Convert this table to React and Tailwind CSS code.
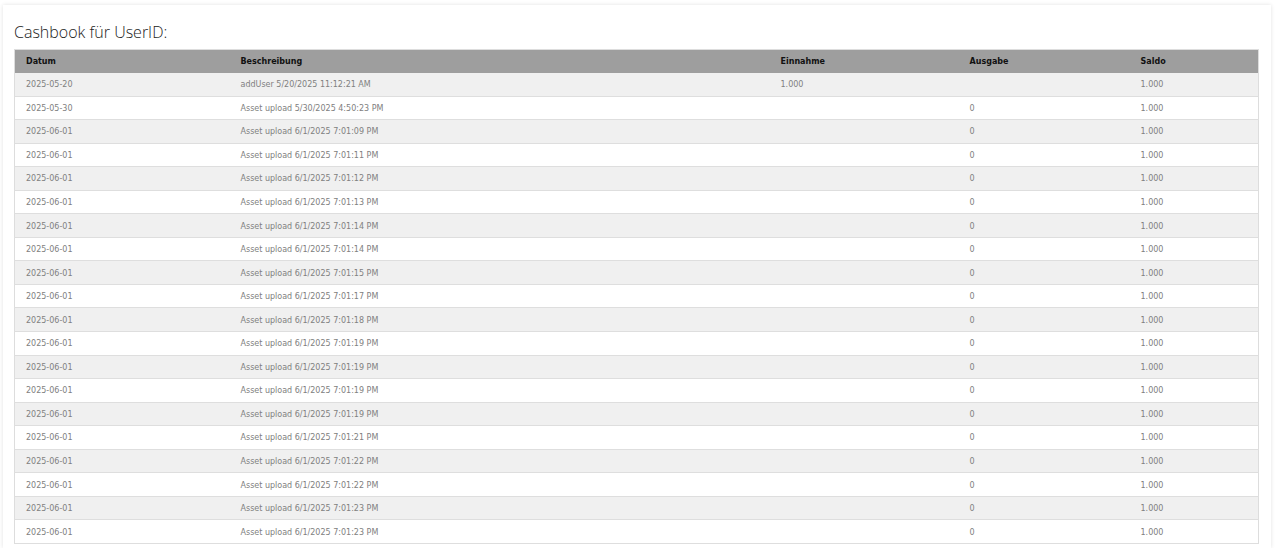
import React from 'react'

const rows = [
  ['2025-05-20', 'addUser 5/20/2025 11:12:21 AM', '1.000', '', '1.000'],
  ['2025-05-30', 'Asset upload 5/30/2025 4:50:23 PM', '', '0', '1.000'],
  ['2025-06-01', 'Asset upload 6/1/2025 7:01:09 PM', '', '0', '1.000'],
  ['2025-06-01', 'Asset upload 6/1/2025 7:01:11 PM', '', '0', '1.000'],
  ['2025-06-01', 'Asset upload 6/1/2025 7:01:12 PM', '', '0', '1.000'],
  ['2025-06-01', 'Asset upload 6/1/2025 7:01:13 PM', '', '0', '1.000'],
  ['2025-06-01', 'Asset upload 6/1/2025 7:01:14 PM', '', '0', '1.000'],
  ['2025-06-01', 'Asset upload 6/1/2025 7:01:14 PM', '', '0', '1.000'],
  ['2025-06-01', 'Asset upload 6/1/2025 7:01:15 PM', '', '0', '1.000'],
  ['2025-06-01', 'Asset upload 6/1/2025 7:01:17 PM', '', '0', '1.000'],
  ['2025-06-01', 'Asset upload 6/1/2025 7:01:18 PM', '', '0', '1.000'],
  ['2025-06-01', 'Asset upload 6/1/2025 7:01:19 PM', '', '0', '1.000'],
  ['2025-06-01', 'Asset upload 6/1/2025 7:01:19 PM', '', '0', '1.000'],
  ['2025-06-01', 'Asset upload 6/1/2025 7:01:19 PM', '', '0', '1.000'],
  ['2025-06-01', 'Asset upload 6/1/2025 7:01:19 PM', '', '0', '1.000'],
  ['2025-06-01', 'Asset upload 6/1/2025 7:01:21 PM', '', '0', '1.000'],
  ['2025-06-01', 'Asset upload 6/1/2025 7:01:22 PM', '', '0', '1.000'],
  ['2025-06-01', 'Asset upload 6/1/2025 7:01:22 PM', '', '0', '1.000'],
  ['2025-06-01', 'Asset upload 6/1/2025 7:01:23 PM', '', '0', '1.000'],
  ['2025-06-01', 'Asset upload 6/1/2025 7:01:23 PM', '', '0', '1.000'],
]

const cols = [
  { label: 'Datum', w: 'w-[215px]' },
  { label: 'Beschreibung', w: 'w-[540px]' },
  { label: 'Einnahme', w: 'w-[189px]' },
  { label: 'Ausgabe', w: 'w-[171px]' },
  { label: 'Saldo', w: '' },
]

export default function App() {
  return (
    <div className="min-h-screen bg-white pt-[5px] px-[3px]">
      <div className="w-[1268px] bg-white shadow-[0_0_4px_rgba(0,0,0,0.12)] px-[11px] pt-[15px] pb-[4px]">
        <h2 className="font-['Open_Sans',sans-serif] font-light text-[16px] leading-[24px] text-[#222] mb-[5px]">
          Cashbook für UserID:
        </h2>

        <table className="w-[1245px] border border-[#ddd] border-collapse table-fixed font-['DejaVu_Sans',sans-serif] text-[8px]">
          <thead>
            <tr className="bg-[#9e9e9e] h-[23px]">
              {cols.map((c) => (
                <th key={c.label} className={`${c.w} text-left font-bold text-[#111] pl-[11px] pt-px`}>
                  {c.label}
                </th>
              ))}
            </tr>
          </thead>
          <tbody>
            {rows.map((r, i) => (
              <tr
                key={i}
                className={`h-[23.55px] border-b border-[#dedede] ${i % 2 === 0 ? 'bg-[#f0f0f0]' : 'bg-white'}`}
              >
                {r.map((cell, j) => (
                  <td key={j} className="pl-[11px] pt-[2px] text-[#808080]">
                    {cell}
                  </td>
                ))}
              </tr>
            ))}
          </tbody>
        </table>
      </div>
    </div>
  )
}
